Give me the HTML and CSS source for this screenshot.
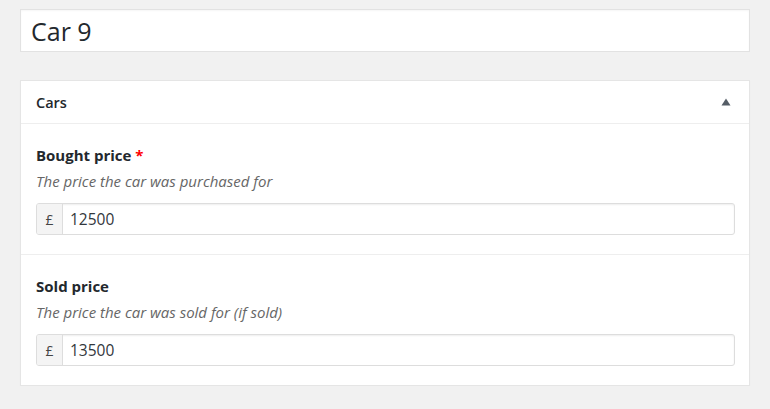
FILE: index.html
```html
<!DOCTYPE html>
<html>
<head>
<meta charset="utf-8">
<link rel="stylesheet" href="styles.css">
</head>
<body>
<div class="page">
  <div class="title-box">Car 9</div>
  <div class="postbox">
    <div class="postbox-header">
      <span class="postbox-title">Cars</span>
      <svg class="toggle" width="10" height="8" viewBox="0 0 10 8"><polygon points="5,0.5 9.5,7.5 0.5,7.5" fill="#555d66"/></svg>
    </div>
    <div class="field">
      <div class="label">Bought price <span class="req">*</span></div>
      <div class="desc">The price the car was purchased for</div>
      <div class="input-group">
        <span class="prefix">£</span>
        <span class="value">12500</span>
      </div>
    </div>
    <div class="field">
      <div class="label">Sold price</div>
      <div class="desc">The price the car was sold for (if sold)</div>
      <div class="input-group">
        <span class="prefix">£</span>
        <span class="value">13500</span>
      </div>
    </div>
  </div>
</div>
</body>
</html>
```
FILE: styles.css
```css
html, body {
  margin: 0;
  padding: 0;
  background: #f1f1f1;
}
body {
  font-family: "Open Sans", "Noto Sans", sans-serif;
  color: #23282d;
  font-size: 15px;
}
.page {
  padding: 9px 20px 0 20px;
  display: flex;
  flex-direction: column;
  gap: 28px;
}
.title-box {
  height: 41px;
  border: 1px solid #e2e2e2;
  background: #fff;
  box-shadow: inset 0 1px 2px rgba(0,0,0,0.04);
  font-size: 25px;
  line-height: 43px;
  padding-left: 10px;
  color: #23282d;
}
.postbox {
  background: #fff;
  border: 1px solid #e5e5e5;
  box-shadow: 0 1px 1px rgba(0,0,0,0.04);
}
.postbox-header {
  height: 42px;
  border-bottom: 1px solid #eee;
  display: flex;
  align-items: center;
  justify-content: space-between;
  padding: 0 18px 0 15px;
}
.postbox-title {
  font-size: 14.5px;
  font-weight: 600;
  padding-top: 1px;
}
.toggle {
  display: block;
  margin-top: -1px;
}
.field {
  padding: 21px 14px 19px 15px;
}
.field + .field {
  border-top: 1px solid #eee;
}
.label {
  font-weight: 700;
  line-height: 20px;
  margin-bottom: 6px;
  color: #23282d;
}
.req {
  color: #f00;
}
.desc {
  font-style: italic;
  color: #666;
  line-height: 20px;
  margin-bottom: 12px;
}
.input-group {
  display: flex;
  height: 30px;
  border: 1px solid #ddd;
  border-radius: 3px;
  box-shadow: inset 0 1px 2px rgba(0,0,0,0.07);
  overflow: hidden;
}
.prefix {
  width: 25px;
  background: #f4f4f4;
  border-right: 1px solid #ddd;
  display: flex;
  align-items: center;
  justify-content: center;
  font-size: 14px;
  color: #444;
}
.value {
  display: flex;
  align-items: center;
  padding-left: 7px;
  font-size: 15.5px;
  color: #32373c;
}
```
